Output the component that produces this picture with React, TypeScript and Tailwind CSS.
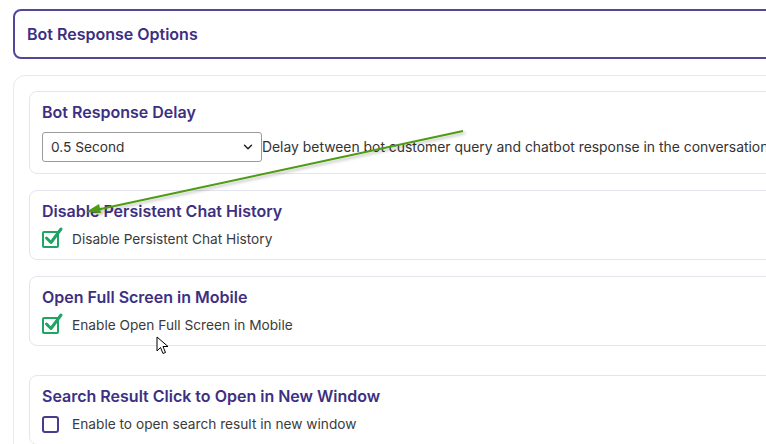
import React from "react";

const font = { fontFamily: "Inter, 'Noto Sans', sans-serif" };

function CheckedBox() {
  return (
    <span className="relative inline-block w-[17px] h-[17px] shrink-0">
      <span className="absolute inset-0 rounded-[2px] border-2 border-[#1fa463]" />
      <svg
        className="absolute left-[2px] top-[-5px]"
        width="20"
        height="20"
        viewBox="0 0 20 20"
        fill="none"
      >
        <path d="M2.5 12 L7 16.5 L17 3" stroke="#1fa463" strokeWidth="3" strokeLinecap="round" strokeLinejoin="round" />
      </svg>
    </span>
  );
}

function EmptyBox() {
  return <span className="inline-block w-[17px] h-[17px] shrink-0 rounded-[3px] border-2 border-[#4a3c8c]" />;
}

function CheckCard({ title, label, checked }: { title: string; label: string; checked: boolean }) {
  return (
    <div className="border border-[#e6e4f1] rounded-lg pl-3 pt-[10px] pb-[10px]">
      <h3 className="text-[16px] leading-5 font-semibold text-[#3d2f82]">{title}</h3>
      <div className="flex items-center gap-[13px] mt-[8px] h-5">
        {checked ? <CheckedBox /> : <EmptyBox />}
        <span className="text-[13.7px] text-[#3b3b3b]">{label}</span>
      </div>
    </div>
  );
}

export default function App() {
  return (
    <div className="relative w-[766px] h-[444px] overflow-hidden bg-white pt-[9px] pl-[13px]" style={font}>
      {/* Header */}
      <div className="w-[800px] h-[50px] border-2 border-[#54459a] rounded-lg flex items-center pl-3">
        <h2 className="text-[16px] font-semibold text-[#3d2f82]">Bot Response Options</h2>
      </div>

      {/* Panel */}
      <div className="w-[800px] mt-4 border border-[#e9e7f4] rounded-xl p-[15px] pb-10 flex flex-col gap-4">
        <div className="border border-[#e6e4f1] rounded-lg pl-3 pt-[10px] pb-[11px]">
          <h3 className="text-[16px] leading-5 font-semibold text-[#3d2f82]">Bot Response Delay</h3>
          <div className="flex items-center mt-[10px]">
            <div className="w-[220px] h-[30px] border border-[#9a9a9a] rounded-[3px] flex items-center justify-between pl-2 pr-[6px] text-[13.7px] text-[#333]">
              <span>0.5 Second</span>
              <svg width="14" height="14" viewBox="0 0 24 24" fill="none" stroke="#222" strokeWidth="2.5" strokeLinecap="round" strokeLinejoin="round">
                <path d="M6 9l6 6 6-6" />
              </svg>
            </div>
            <span className="text-[13.9px] text-[#333] whitespace-nowrap">
              Delay between bot customer query and chatbot response in the conversation
            </span>
          </div>
        </div>

        <CheckCard title="Disable Persistent Chat History" label="Disable Persistent Chat History" checked />
        <CheckCard title="Open Full Screen in Mobile" label="Enable Open Full Screen in Mobile" checked />
        <div className="mt-[13px]">
          <CheckCard title="Search Result Click to Open in New Window" label="Enable to open search result in new window" checked={false} />
        </div>
      </div>

      {/* Annotation arrow */}
      <svg className="absolute left-0 top-0 pointer-events-none" width="766" height="444">
        <defs>
          <filter id="sh" x="-10%" y="-50%" width="120%" height="200%">
            <feDropShadow dx="2" dy="2" stdDeviation="1.5" floodColor="#000" floodOpacity="0.25" />
          </filter>
        </defs>
        <g filter="url(#sh)">
          <line x1="463" y1="131" x2="96" y2="210" stroke="#4f9a12" strokeWidth="2" />
          <polygon points="86,212 99,204 101,213" fill="#4f9a12" />
        </g>
      </svg>

      {/* Mouse cursor */}
      <svg className="absolute left-[156px] top-[336px]" width="14" height="20" viewBox="0 0 14 20">
        <path d="M1 1 L1 15 L4.5 11.5 L7 17.5 L9.5 16.5 L7 10.5 L12 10.5 Z" fill="#fff" stroke="#000" strokeWidth="1" strokeLinejoin="round" />
      </svg>
    </div>
  );
}
